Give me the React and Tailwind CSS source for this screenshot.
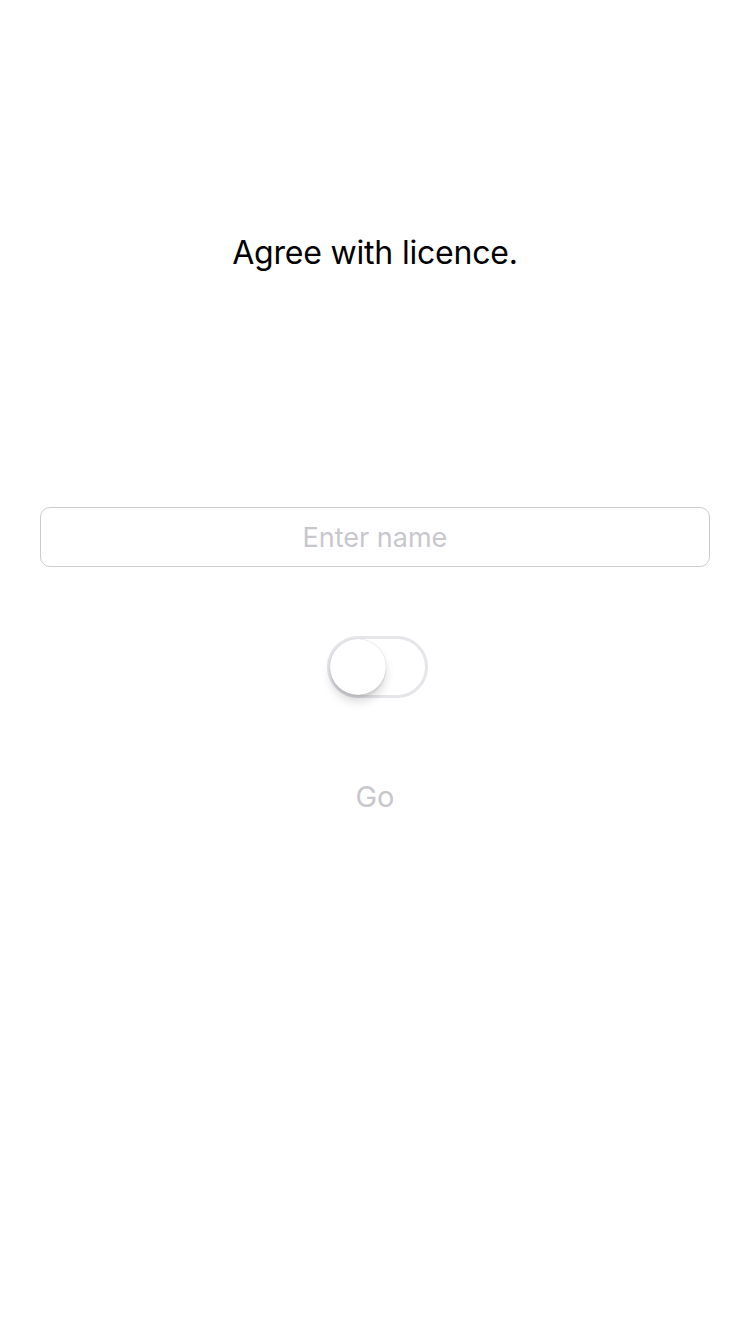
import { useState } from 'react'

export default function App() {
    const [name, setName] = useState('')
    const [agreed, setAgreed] = useState(false)

    return (
        <div className="min-h-[1334px] w-full bg-white flex flex-col items-center font-['Inter','Liberation_Sans',sans-serif]">
            {/* Title */}
            <h1 className="pt-[233px] text-[32px] leading-[40px] font-normal text-black tracking-[-0.2px]">
                Agree with licence.
            </h1>

            {/* Name input */}
            <input
                value={name}
                onChange={e => setName(e.target.value)}
                placeholder="Enter name"
                className="mt-[234px] w-[670px] h-[60px] box-border border border-[#cccccc] rounded-[10px] text-center text-[27px] text-black placeholder:text-[#c7c7cd] outline-none"
            />

            {/* Switch */}
            <button
                onClick={() => setAgreed(!agreed)}
                className={`mt-[69px] ml-[4px] relative w-[101px] h-[62px] rounded-full border-[3px] ${agreed ? 'bg-[#4cd964] border-[#4cd964]' : 'bg-white border-[#e5e5ea]'}`}
            >
                <span className={`absolute top-[0px] ${agreed ? 'left-[39px]' : 'left-[0px]'} w-[56px] h-[56px] rounded-full bg-white shadow-[0_7px_10px_rgba(0,0,0,0.14),0_0_1px_rgba(0,0,0,0.25),0_3px_1px_rgba(0,0,0,0.06)]`}></span>
            </button>

            {/* Go button */}
            <button
                disabled={!agreed || !name}
                className="mt-[79px] text-[29px] leading-[40px] text-[#c7c7cc] disabled:text-[#c7c7cc]"
            >
                Go
            </button>
        </div>
    )
}
